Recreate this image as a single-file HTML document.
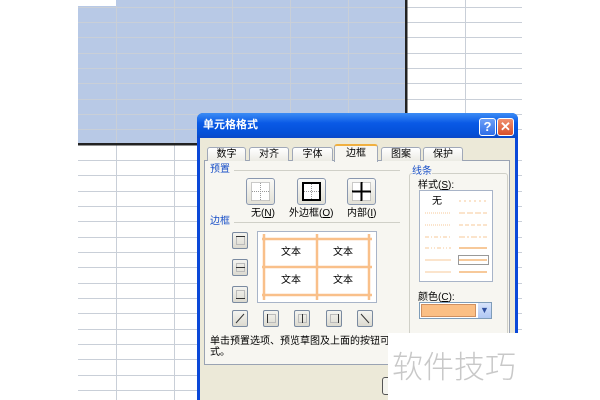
<!DOCTYPE html>
<html><head><meta charset="utf-8"><style>
*{margin:0;padding:0;box-sizing:border-box}
body{width:600px;height:400px;overflow:hidden;background:#fff;position:relative;font-family:"Liberation Sans","Noto Sans CJK SC",sans-serif;font-size:10px;color:#000}
.a{position:absolute}
.t{position:absolute;white-space:nowrap;font-size:10px;line-height:11px}
.btn{position:absolute;width:16px;height:17px;border:1px solid #7a8aa0;border-radius:2px;background:linear-gradient(#f4f4f0,#dcdad0)}
.pb{position:absolute;width:29px;height:27px;border:1px solid #8a98b0;border-radius:3px;background:linear-gradient(#fafaf7,#e2e0d6)}
.tab{position:absolute;top:147px;height:14px;border:1px solid #a0a8b8;border-bottom:none;border-radius:3px 3px 0 0;background:linear-gradient(#fff,#ecebe4);text-align:center;font-size:10px;line-height:13px}
</style></head><body>
<svg class="a" style="left:0;top:0" width="600" height="400">
<rect x="78" y="6" width="328" height="138" fill="#b8c9e6"/>
<rect x="78" y="0" width="328" height="6" fill="#b8c9e6"/>
<rect x="60" y="0" width="56" height="6" fill="#fff"/>
<g stroke="#c9cfd8" stroke-width="1">
<line x1="78" y1="22.5" x2="522" y2="22.5"/><line x1="78" y1="37.5" x2="522" y2="37.5"/><line x1="78" y1="53.5" x2="522" y2="53.5"/><line x1="78" y1="68.5" x2="522" y2="68.5"/><line x1="78" y1="83.5" x2="522" y2="83.5"/><line x1="78" y1="99.5" x2="522" y2="99.5"/><line x1="78" y1="114.5" x2="522" y2="114.5"/><line x1="78" y1="129.5" x2="522" y2="129.5"/>
<line x1="78" y1="7.5" x2="522" y2="7.5"/>
<line x1="78" y1="160.5" x2="522" y2="160.5"/><line x1="78" y1="175.5" x2="522" y2="175.5"/><line x1="78" y1="191.5" x2="522" y2="191.5"/><line x1="78" y1="206.5" x2="522" y2="206.5"/><line x1="78" y1="221.5" x2="522" y2="221.5"/><line x1="78" y1="237.5" x2="522" y2="237.5"/><line x1="78" y1="252.5" x2="522" y2="252.5"/><line x1="78" y1="267.5" x2="522" y2="267.5"/><line x1="78" y1="283.5" x2="522" y2="283.5"/><line x1="78" y1="298.5" x2="522" y2="298.5"/><line x1="78" y1="313.5" x2="522" y2="313.5"/><line x1="78" y1="329.5" x2="522" y2="329.5"/><line x1="78" y1="344.5" x2="522" y2="344.5"/><line x1="78" y1="359.5" x2="522" y2="359.5"/><line x1="78" y1="375.5" x2="522" y2="375.5"/><line x1="78" y1="390.5" x2="522" y2="390.5"/>
<line x1="116.5" y1="6" x2="116.5" y2="400"/><line x1="174.5" y1="0" x2="174.5" y2="400"/><line x1="232.5" y1="0" x2="232.5" y2="144"/><line x1="290.5" y1="0" x2="290.5" y2="144"/><line x1="348.5" y1="0" x2="348.5" y2="144"/><line x1="465.5" y1="0" x2="465.5" y2="400"/>
</g>
<rect x="78" y="143" width="329" height="2.5" fill="#222"/>
<rect x="405" y="0" width="2.5" height="145" fill="#222"/>
</svg>
<!-- dialog -->
<div class="a" style="left:197px;top:113px;width:321px;height:287px;background:#0a48d8;border-radius:6px 6px 0 0"></div>
<div class="a" style="left:197px;top:113px;width:321px;height:25px;border-radius:6px 6px 0 0;background:linear-gradient(#3d8df5,#0a5ae6 40%,#0450d8 80%,#0a48c8)"></div>
<div class="t" style="left:203px;top:119px;color:#fff;font-weight:bold;font-size:11px;line-height:12px">单元格格式</div>
<div class="a" style="left:479px;top:118px;width:17px;height:18px;border:1px solid #fff;border-radius:3px;background:linear-gradient(#6ea0f8,#2f6ee8);color:#fff;font-weight:bold;font-size:13px;text-align:center;line-height:16px">?</div>
<div class="a" style="left:497px;top:118px;width:17px;height:18px;border:1px solid #fff;border-radius:3px;background:linear-gradient(#f09070,#d8502a);color:#fff;font-weight:bold;font-size:13px;text-align:center;line-height:16px">✕</div>
<div class="a" style="left:200px;top:138px;width:315px;height:262px;background:#ece9d8"></div>
<!-- panel -->
<div class="a" style="left:204px;top:160px;width:306px;height:205px;border:1px solid #9aa3b3;background:#f7f6f1"></div>
<div class="tab" style="left:207px;width:39px">数字</div>
<div class="tab" style="left:249px;width:40px">对齐</div>
<div class="tab" style="left:292px;width:41px">字体</div>
<div class="tab" style="left:334px;top:144px;height:18px;width:44px;background:#f7f6f1;border-top:2px solid #f0b040;line-height:15px">边框</div>
<div class="tab" style="left:381px;width:40px">图案</div>
<div class="tab" style="left:423px;width:40px">保护</div>
<div class="t" style="left:210px;top:164px;color:#1a50c8">预置</div>
<div class="a" style="left:234px;top:170px;width:166px;height:1px;background:#d0d0c8"></div>
<div class="t" style="left:210px;top:216px;color:#1a50c8">边框</div>
<div class="a" style="left:234px;top:222px;width:166px;height:1px;background:#d0d0c8"></div>
<!-- preset buttons -->
<div class="pb" style="left:246px;top:178px"><svg width="27" height="25"><rect x="4.5" y="3.5" width="18" height="18" fill="#fff" stroke="#999" stroke-dasharray="1 1"/><line x1="13.5" y1="4" x2="13.5" y2="21" stroke="#999" stroke-dasharray="1 1"/><line x1="5" y1="12.5" x2="22" y2="12.5" stroke="#999" stroke-dasharray="1 1"/></svg></div>
<div class="pb" style="left:297px;top:178px"><svg width="27" height="25"><rect x="5" y="4" width="17" height="17" fill="#fff" stroke="#000" stroke-width="2"/><line x1="13.5" y1="5" x2="13.5" y2="20" stroke="#999" stroke-dasharray="1 1"/><line x1="6" y1="12.5" x2="21" y2="12.5" stroke="#999" stroke-dasharray="1 1"/></svg></div>
<div class="pb" style="left:347px;top:178px"><svg width="27" height="25"><rect x="4.5" y="3.5" width="18" height="18" fill="#fff" stroke="#999" stroke-dasharray="1 1"/><line x1="13.5" y1="3" x2="13.5" y2="22" stroke="#000" stroke-width="2"/><line x1="4" y1="12.5" x2="23" y2="12.5" stroke="#000" stroke-width="2"/></svg></div>
<div class="t" style="left:251px;top:208px">无(<u>N</u>)</div>
<div class="t" style="left:289px;top:208px">外边框(<u>O</u>)</div>
<div class="t" style="left:347px;top:208px">内部(<u>I</u>)</div>
<!-- side buttons -->
<div class="btn" style="left:232px;top:232px"><svg width="14" height="15"><rect x="3.5" y="3.5" width="8" height="8" fill="none" stroke="#bbb"/><line x1="3" y1="3.5" x2="12" y2="3.5" stroke="#333"/></svg></div>
<div class="btn" style="left:232px;top:259px"><svg width="14" height="15"><rect x="3.5" y="3.5" width="8" height="8" fill="none" stroke="#bbb"/><line x1="3" y1="7.5" x2="12" y2="7.5" stroke="#333"/></svg></div>
<div class="btn" style="left:232px;top:286px"><svg width="14" height="15"><rect x="3.5" y="3.5" width="8" height="8" fill="none" stroke="#bbb"/><line x1="3" y1="11.5" x2="12" y2="11.5" stroke="#333"/></svg></div>
<div class="btn" style="left:232px;top:310px"><svg width="14" height="15"><line x1="3" y1="12" x2="11" y2="3" stroke="#333"/></svg></div>
<div class="btn" style="left:263px;top:310px"><svg width="14" height="15"><rect x="3.5" y="3.5" width="8" height="8" fill="none" stroke="#bbb"/><line x1="3.5" y1="3" x2="3.5" y2="12" stroke="#333"/></svg></div>
<div class="btn" style="left:294px;top:310px"><svg width="14" height="15"><rect x="3.5" y="3.5" width="8" height="8" fill="none" stroke="#bbb"/><line x1="7.5" y1="3" x2="7.5" y2="12" stroke="#333"/></svg></div>
<div class="btn" style="left:326px;top:310px"><svg width="14" height="15"><rect x="3.5" y="3.5" width="8" height="8" fill="none" stroke="#bbb"/><line x1="11.5" y1="3" x2="11.5" y2="12" stroke="#333"/></svg></div>
<div class="btn" style="left:357px;top:310px"><svg width="14" height="15"><line x1="3" y1="3" x2="11" y2="12" stroke="#333"/></svg></div>
<!-- preview -->
<div class="a" style="left:257px;top:231px;width:120px;height:72px;background:#fff;border:1px solid #a8b4c8"></div>
<svg class="a" style="left:257px;top:231px" width="120" height="72">
<g stroke="#f9c08a" stroke-width="2.5"><line x1="5" y1="8" x2="115" y2="8"/><line x1="5" y1="36" x2="115" y2="36"/><line x1="5" y1="64" x2="115" y2="64"/><line x1="7" y1="3" x2="7" y2="69"/><line x1="60" y1="3" x2="60" y2="69"/><line x1="112" y1="3" x2="112" y2="69"/></g></svg>
<div class="t" style="left:281px;top:247px">文本</div><div class="t" style="left:333px;top:247px">文本</div>
<div class="t" style="left:281px;top:275px">文本</div><div class="t" style="left:333px;top:275px">文本</div>
<div class="t" style="left:210px;top:336px">单击预置选项、预览草图及上面的按钮可以</div>
<div class="t" style="left:210px;top:347px">式。</div>
<!-- line group -->
<div class="a" style="left:409px;top:173px;width:99px;height:200px;border:1px solid #d0d0c8;border-radius:3px"></div>
<div class="t" style="left:412px;top:166px;color:#1a50c8;background:#f7f6f1">线条</div>
<div class="t" style="left:418px;top:180px">样式(<u>S</u>):</div>
<div class="a" style="left:419px;top:190px;width:74px;height:92px;background:#fff;border:1px solid #a8b4c8"></div>
<div class="t" style="left:432px;top:196px">无</div>
<svg class="a" style="left:419px;top:190px" width="74" height="92">
<g stroke="#f7c99a"><line x1="40" y1="11" x2="68" y2="11" stroke-dasharray="2 3"/><line x1="40" y1="23" x2="68" y2="23" stroke-dasharray="6 2"/><line x1="40" y1="35" x2="68" y2="35" stroke-dasharray="4 2"/><line x1="40" y1="47" x2="68" y2="47" stroke-dasharray="6 2 2 2"/><line x1="40" y1="58" x2="68" y2="58" stroke-width="2"/><line x1="40" y1="70" x2="68" y2="70" stroke-width="2"/><line x1="40" y1="82" x2="68" y2="82" stroke-width="2"/>
<line x1="6" y1="35" x2="32" y2="35" stroke-dasharray="1 1"/><line x1="6" y1="47" x2="32" y2="47" stroke-dasharray="4 2 1 2"/><line x1="6" y1="58" x2="32" y2="58" stroke-dasharray="4 2 1 2 1 2"/><line x1="6" y1="70" x2="32" y2="70"/><line x1="6" y1="82" x2="32" y2="82"/><line x1="6" y1="23" x2="32" y2="23" stroke-dasharray="1 1"/></g>
<rect x="39.5" y="65.5" width="30" height="9" fill="none" stroke="#999"/></svg>
<div class="t" style="left:418px;top:292px">颜色(<u>C</u>):</div>
<div class="a" style="left:419px;top:302px;width:73px;height:17px;border:1px solid #7f9db9;background:#fff"></div>
<div class="a" style="left:421px;top:304px;width:55px;height:13px;background:#fbbf85;border:1px solid #d09060"></div>
<div class="a" style="left:478px;top:303px;width:13px;height:15px;background:linear-gradient(#d8e4fb,#b0c8f4);color:#3050a0;font-size:9px;text-align:center;line-height:15px">▼</div>
<div class="a" style="left:382px;top:377px;width:10px;height:18px;border:1px solid #555;border-radius:3px;background:#f4f4ee"></div>
<!-- watermark -->
<div class="a" style="left:388px;top:333px;width:212px;height:67px;background:#fff"></div>
<div class="t" style="left:392px;top:348px;font-size:31px;line-height:34px;color:#c8c8c8;font-family:'Noto Sans CJK SC',sans-serif;font-weight:300">软件技巧</div>
</body></html>
